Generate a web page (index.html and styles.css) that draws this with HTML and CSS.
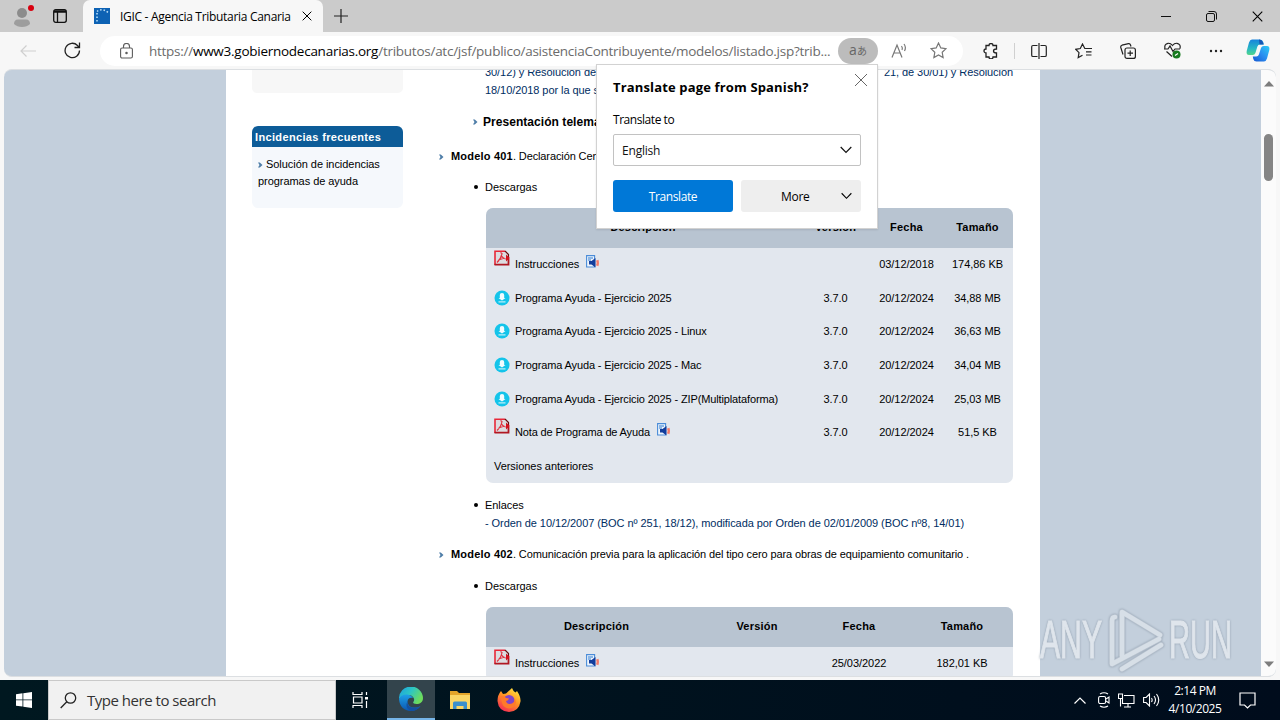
FILE: index.html
```html
<!DOCTYPE html>
<html lang="es">
<head>
    <meta charset="UTF-8">
    <title>IGIC - Agencia Tributaria Canaria</title>
    <link rel="stylesheet" href="styles.css">
</head>

<body>
<!-- shared icons -->
<svg class="defs" width="0" height="0">
    <symbol id="pdf" viewBox="0 0 16 16">
        <path d="M1 1h10l4 4v10H1z" fill="#dcdce0"/>
        <path d="M1 15V1.200h10" fill="none" stroke="#e82838" stroke-width="1.600"/>
        <path d="M.500 14.700h14V9" fill="none" stroke="#b01822" stroke-width="1.800"/>
        <path d="M11 1l3.500 3.500V7" fill="none" stroke="#611" stroke-width="1.200"/>
        <path d="M3 12.500Q7 9 8 3.500L6.500 2.500M7.500 6q2 3 5 3M4.500 10l6-2" fill="none" stroke="#e0323e" stroke-width="1.200"/>
        <path d="M12 4.500l4 3.500-4 3.500z" fill="#d3121e"/>
    </symbol>
    <symbol id="audio" viewBox="0 0 13 14">
        <path d="M.6.6h8v11.400h-8z" fill="#eef5fc" stroke="#4a8cd8" stroke-width="1.100"/>
        <path d="M2 3h5M2 5h3" stroke="#2a78d0"/>
        <path d="M3 6h2.500L9.500 3v9.500L5.500 9.500H3z" fill="#123d9c"/>
        <path d="M10.500 5.500q1.500 2.500 0 5M11.800 5q1 3 0 6" fill="none" stroke="#f47a68" stroke-width="1.300"/>
    </symbol>
    <symbol id="down" viewBox="0 0 16 16">
        <circle cx="8" cy="8" r="7.500" fill="#14c4ea"/>
        <path d="M5.800 5q0-2 2.200-2t2.200 2v3h1.300L8 10.500 4.500 8h1.300z" fill="#f2fcfe"/>
        <path d="M4.500 11.800h7" stroke="#b8eef8" stroke-width="1.200"/>
    </symbol>
    <symbol id="arrow" viewBox="0 0 5 6">
        <path d="M0 .500h1.800L4.500 3 1.800 5.500H0L1.500 3z" fill="#4f7ea8"/>
    </symbol>
    <symbol id="chevron" viewBox="0 0 12 8">
        <path d="M.7 1L6 6.500 11.300 1" fill="none" stroke="currentColor" stroke-width="1.200"/>
    </symbol>
    <symbol id="cross" viewBox="0 0 12 12">
        <path d="M.8.800l10.400 10.400M11.200.800L.8 11.200" fill="none" stroke="currentColor" stroke-width="1.200"/>
    </symbol>
</svg>

<div class="browser">
    <header class="tabbar">
        <div class="tabbar-left">
            <svg class="profile" width="22" height="24" viewBox="0 0 22 24">
                <circle cx="10" cy="9" r="5" fill="#8c8c8c"/>
                <path d="M2 20q0-4.500 4-4.500h8q4 0 4 4.500-3 3-8 3t-8-3z" fill="#9d9d9d"/>
                <circle cx="19" cy="4" r="3" fill="#d8000f"/>
            </svg>
            <svg class="workspaces" width="14" height="14" viewBox="0 0 14 14">
                <rect x=".7" y=".7" width="12.600" height="12.600" rx="2" fill="none" stroke="#111" stroke-width="1.300"/>
                <path d="M1 2.500h12" stroke="#111" stroke-width="2.500"/>
                <path d="M4.500 3v10" stroke="#111" stroke-width="1.300"/>
            </svg>
        </div>
        <div class="tab">
            <svg width="16" height="16" viewBox="0 0 16 16">
                <path d="M0 0h16v16H0z" fill="#0d62b4"/>
                <path d="M3 3.500q5-4 11 1" fill="none" stroke="#bfe0f8" stroke-width="1.500" stroke-dasharray="1.500 2"/>
                <path d="M3 5v9" stroke="#8fc3ec" stroke-width="2" stroke-dasharray="1.500 2"/>
            </svg>
            <span class="tab-title">IGIC - Agencia Tributaria Canaria</span>
            <svg class="tab-close" width="10" height="10"><use href="#cross"/></svg>
        </div>
        <svg class="new-tab" width="14" height="14" viewBox="0 0 14 14"><path d="M7 0v14M0 7h14" stroke="#222" stroke-width="1.200"/></svg>
        <div class="window-buttons">
            <svg width="10" height="10" viewBox="0 0 10 10"><path d="M0 5.500h10" stroke="#111"/></svg>
            <svg width="11" height="11" viewBox="0 0 11 11" fill="none" stroke="#111"><rect x=".5" y="2.500" width="8" height="8" rx="1.500"/><path d="M2.500.500H8q2.500 0 2.500 2.500v5.500"/></svg>
            <svg width="11" height="11"><use href="#cross"/></svg>
        </div>
    </header>

    <div class="toolbar">
        <svg class="back" width="16" height="12" viewBox="0 0 16 12" fill="none" stroke="#cfcfcf" stroke-width="1.200"><path d="M16 6H1M6.500.500L1 6l5.500 5.500"/></svg>
        <svg class="reload" width="17" height="17" viewBox="0 0 17 17" fill="none" stroke="#222" stroke-width="1.300"><path d="M15.500 8.500a7.200 7.200 0 1 1-2-5l1.500 1.700M15.500.500v5h-5"/></svg>
        <div class="address">
            <svg class="lock" width="13" height="16" viewBox="0 0 13 16" fill="none" stroke="#5c5c5c" stroke-width="1.100"><rect x=".6" y="5" width="11.800" height="10" rx="1.500"/><path d="M3.500 5V3.500a3 3 0 0 1 6 0V5"/><circle cx="6.500" cy="10" r=".7" fill="#5c5c5c"/></svg>
            <div class="url">https://<b>www3.gobiernodecanarias.org</b>/tributos/atc/jsf/publico/asistenciaContribuyente/modelos/listado.jsp?trib...</div>
            <span class="translate-pill">a<small>あ</small></span>
            <svg class="read" width="17" height="16" viewBox="0 0 17 16" fill="none" stroke="#777" stroke-width="1.200"><path d="M1 14.500L6 2l5 12.500M2.800 10h6.400M10.500 3q1.500 2 .5 4M13 1q2.500 3.500.5 7"/></svg>
            <svg class="star" width="17" height="17" viewBox="0 0 17 17" fill="none" stroke="#777" stroke-width="1.200"><path d="M8.500 1l2.300 4.900 5.200.7-3.800 3.700.9 5.300-4.600-2.600-4.600 2.600.9-5.300L1 6.600l5.200-.7z"/></svg>
        </div>
        <div class="tools">
            <svg width="16" height="16" viewBox="0 0 16 16" fill="none" stroke="#222" stroke-width="1.300"><path d="M3 2.500h3a2 2 0 0 1 4 0h3.500V6q-3 0-3 2t3 2v4H10a2 2 0 0 1-4 0H3v-4a2 2 0 0 1 0-4z"/></svg>
            <i class="divider"></i>
            <svg width="16" height="16" viewBox="0 0 16 16" fill="none" stroke="#222" stroke-width="1.200"><path d="M6.500 2.500H2q-1.300 0-1.300 1.300v8.400q0 1.300 1.300 1.300h4.500M9.500 2.500H14q1.300 0 1.300 1.300v8.400q0 1.300-1.300 1.300H9.500M8 0v16"/></svg>
            <svg width="17" height="16" viewBox="0 0 17 16" fill="none" stroke="#222" stroke-width="1.200"><path d="M11 5.500H9.800L7.500 1 5.300 5.500l-4.700.8 3.400 3.300-.8 5 4.300-2.300M11 5.500h6M11 8.800h5.500M11 12h5.500"/></svg>
            <svg width="16" height="16" viewBox="0 0 16 16" fill="none" stroke="#222" stroke-width="1.200"><rect x="5" y="5" width="10.400" height="10.400" rx="2"/><path d="M10.200 7.500v5.500M7.500 10.200H13M3 11.500L.8 4.500q-.4-1.800 1.200-2.300L8.500.700q1.500-.3 2 1.300l.5 1.500"/></svg>
            <svg width="17" height="17" viewBox="0 0 17 17" fill="none" stroke="#222" stroke-width="1.200"><path d="M1 6.500Q0 2 4 1.300 6.500 1 8.500 3.500 10.500 1 13 1.300 17 2 16 6.500M0 7h4l2-3 3 5.500L11 7h5M2.500 9.500L8 14.500"/><circle cx="12.500" cy="12.500" r="4" fill="#167a1e" stroke="none"/><path d="M11 13.500l3-2" stroke="#fff"/></svg>
            <svg width="14" height="4" viewBox="0 0 14 4" fill="#222"><circle cx="2" cy="2" r="1.200"/><circle cx="7" cy="2" r="1.200"/><circle cx="12" cy="2" r="1.200"/></svg>
            <svg class="copilot" width="24" height="23" viewBox="0 0 24 23">
                <defs>
                    <linearGradient id="cop1" x1="0" y1="0" x2="0" y2="1"><stop offset="0" stop-color="#1783dc"/><stop offset=".6" stop-color="#28b9c3"/><stop offset="1" stop-color="#53d58a"/></linearGradient>
                    <linearGradient id="cop2" x1="1" y1="0" x2="0" y2="1"><stop offset="0" stop-color="#2ccdf5"/><stop offset=".5" stop-color="#2a8df0"/><stop offset="1" stop-color="#1558d0"/></linearGradient>
                </defs>
                <path d="M6 .500h8q2.500 0 3.200 2.500l.8 2.500h-4q-2 0-2.600 2l-2 6.500q-.7 2-2.700 2H3q-3 0-2.300-4L3 3.500Q4 .500 6 .500z" fill="url(#cop1)"/>
                <path d="M18 22.500h-7.500q-2.500 0-3.200-2.500l-.5-2.500h3.500q2 0 2.600-2L15 9q.7-2 2.700-2H21q3 0 2.300 4L21 19.500q-1 3-3 3z" fill="url(#cop2)"/>
                <path d="M13 .500q3 0 3.700 2.500L17.500 5.500h-4z" fill="#1656b5"/>
            </svg>
        </div>
    </div>

    <div class="viewport">
        <main class="page">
            <aside class="sidebar">
                <div class="side-empty"></div>
                <section class="side-box">
                    <h2>Incidencias frecuentes</h2>
                    <p><svg width="5" height="6"><use href="#arrow"/></svg> Solución de incidencias programas de ayuda</p>
                </section>
            </aside>
            <div class="content">
                <p class="links links-top"><span>30/12) y Resolución de</span><span>21, de 30/01) y Resolución</span></p>
                <p class="links">18/10/2018 por la que s</p>
                <p class="telematic"><svg width="5" height="6"><use href="#arrow"/></svg><b>Presentación telemática</b></p>

                <p class="model"><svg width="5" height="6"><use href="#arrow"/></svg><b>Modelo 401</b>. Declaración Censal</p>
                <p class="item first-item">Descargas</p>
                <table class="files">
                    <thead>
                    <tr><th class="w-desc">Descripción</th><th class="w-ver">Versión</th><th class="w-date">Fecha</th><th class="w-size">Tamaño</th></tr>
                    </thead>
                    <tbody>
                    <tr><td><div class="file"><svg class="pdf" width="16" height="16"><use href="#pdf"/></svg><span>Instrucciones</span><svg class="audio" width="13" height="14"><use href="#audio"/></svg></div></td><td></td><td>03/12/2018</td><td>174,86 KB</td></tr>
                    <tr><td><div class="file program"><svg width="16" height="16"><use href="#down"/></svg><span>Programa Ayuda - Ejercicio 2025</span></div></td><td>3.7.0</td><td>20/12/2024</td><td>34,88 MB</td></tr>
                    <tr><td><div class="file program"><svg width="16" height="16"><use href="#down"/></svg><span>Programa Ayuda - Ejercicio 2025 - Linux</span></div></td><td>3.7.0</td><td>20/12/2024</td><td>36,63 MB</td></tr>
                    <tr><td><div class="file program"><svg width="16" height="16"><use href="#down"/></svg><span>Programa Ayuda - Ejercicio 2025 - Mac</span></div></td><td>3.7.0</td><td>20/12/2024</td><td>34,04 MB</td></tr>
                    <tr><td><div class="file program"><svg width="16" height="16"><use href="#down"/></svg><span>Programa Ayuda - Ejercicio 2025 - ZIP(Multiplataforma)</span></div></td><td>3.7.0</td><td>20/12/2024</td><td>25,03 MB</td></tr>
                    <tr><td><div class="file note"><svg class="pdf" width="16" height="16"><use href="#pdf"/></svg><span>Nota de Programa de Ayuda</span><svg class="audio" width="13" height="14"><use href="#audio"/></svg></div></td><td>3.7.0</td><td>20/12/2024</td><td>51,5 KB</td></tr>
                    <tr><td colspan="4">Versiones anteriores</td></tr>
                    </tbody>
                </table>
                <p class="item second-item">Enlaces</p>
                <p class="links orden">- Orden de 10/12/2007 (BOC nº 251, 18/12), modificada por Orden de 02/01/2009 (BOC nº8, 14/01)</p>

                <p class="model model-next"><svg width="5" height="6"><use href="#arrow"/></svg><b>Modelo 402</b>. Comunicación previa para la aplicación del tipo cero para obras de equipamiento comunitario .</p>
                <p class="item first-item">Descargas</p>
                <table class="files files-short">
                    <thead>
                    <tr><th class="w-desc">Descripción</th><th class="w-ver">Versión</th><th class="w-date">Fecha</th><th class="w-size">Tamaño</th></tr>
                    </thead>
                    <tbody>
                    <tr><td><div class="file"><svg class="pdf" width="16" height="16"><use href="#pdf"/></svg><span>Instrucciones</span><svg class="audio" width="13" height="14"><use href="#audio"/></svg></div></td><td></td><td>25/03/2022</td><td>182,01 KB</td></tr>
                    </tbody>
                </table>
            </div>
        </main>
        <div class="scrollbar">
            <svg width="10" height="6" viewBox="0 0 10 6"><path d="M5 0l5 5.500H0z" fill="#7d7d7d"/></svg>
            <div class="thumb"></div>
            <svg width="10" height="6" viewBox="0 0 10 6"><path d="M0 .500h10L5 6z" fill="#7d7d7d"/></svg>
        </div>
    </div>

    <div class="popup">
        <svg class="popup-close" width="14" height="14" viewBox="0 0 14 14"><path d="M1 1l12 12M13 1L1 13" stroke="currentColor"/></svg>
        <h3>Translate page from Spanish?</h3>
        <label>Translate to</label>
        <div class="select">English<svg width="12" height="8"><use href="#chevron"/></svg></div>
        <div class="popup-buttons">
            <button type="button" class="primary">Translate</button>
            <button type="button" class="more">More<svg width="11" height="8"><use href="#chevron"/></svg></button>
        </div>
    </div>

    <svg class="watermark" width="200" height="66" viewBox="0 0 200 66">
        <g font-family="Liberation Sans" font-size="53" fill="#e6ebf0" stroke="#e6ebf0" stroke-width="1.200">
            <text x="2" y="51" textLength="62" lengthAdjust="spacingAndGlyphs">ANY</text>
            <text x="131" y="51" textLength="63" lengthAdjust="spacingAndGlyphs">RUN</text>
        </g>
        <g fill="none" stroke-linecap="round" stroke-linejoin="round">
            <path d="M77 10q-3 0-3 4v43l47-25M84 49V5l38 23M84 62l39-24" stroke="#b4bfcb" stroke-width="6"/>
            <path d="M77 10q-3 0-3 4v43l47-25M84 49V5l38 23M84 62l39-24" stroke="#dde3ea" stroke-width="4.500"/>
        </g>
    </svg>
</div>

<footer class="taskbar">
    <div class="start"><svg width="16" height="16" viewBox="0 0 16 16" fill="#fff"><path d="M0 2.300l6.500-1v6.200H0zM7.300 1.200L16 0v7.500H7.300zM0 8.300h6.500v6.300L0 13.700zM7.300 8.300H16V16l-8.700-1.200z"/></svg></div>
    <div class="search">
        <svg width="17" height="17" viewBox="0 0 17 17" fill="none" stroke="#222" stroke-width="1.300"><circle cx="10.500" cy="6" r="5.200"/><path d="M6.800 9.700L.7 16"/></svg>
        Type here to search
    </div>
    <div class="task task-view"><svg width="17" height="16" viewBox="0 0 17 16" fill="none" stroke="#fff" stroke-width="1.200"><path d="M1 0v2.500h9V0M1 16v-2.500h9V16M1.500 5h8.500v6H1.500zM14.500 0v3M14.500 9v7"/><path d="M13 5h3v2.500h-3z" fill="#fff" stroke="none"/></svg></div>
    <div class="task edge">
        <svg width="24" height="24" viewBox="0 0 24 24">
            <defs>
                <linearGradient id="edge1" x1="0" y1="0" x2="1" y2=".5"><stop offset="0" stop-color="#1c9ee0"/><stop offset=".5" stop-color="#2cc5c5"/><stop offset="1" stop-color="#6ddc5c"/></linearGradient>
                <linearGradient id="edge2" x1="0" y1="0" x2="0" y2="1"><stop offset="0" stop-color="#1ea0e8"/><stop offset="1" stop-color="#0b56b0"/></linearGradient>
            </defs>
            <path d="M0 12A12 12 0 0 1 24 11c0 4-3 6-6.500 6-3 0-4-1-3-2.300 2-3-1-6.700-5-6.700Q3 8 0 12z" fill="url(#edge1)"/>
            <path d="M0 12Q2 7 8.500 7.500q4 .5 5.500 3.500-5-1-5.500 3.500Q9 21 16 20.500q3 0 5.500-1.500Q18 24 12 24 1 23.500 0 12z" fill="url(#edge2)"/>
            <path d="M8.500 14q-.5 7.500 8 7 3 0 5-2Q18 24 12 24q-7-3-3.500-10z" fill="#1450a0"/>
        </svg>
    </div>
    <div class="task">
        <svg width="22" height="19" viewBox="0 0 22 19">
            <path d="M1 0h7l2 2h11v5H1z" fill="#e4a52a"/>
            <path d="M1 4h20v14H1z" fill="#fbd665"/>
            <path d="M4 18v-6q0-1.500 1.500-1.500h11Q18 10.500 18 12v6h-3.500v-3h-7v3z" fill="#3b8fcc"/>
        </svg>
    </div>
    <div class="task">
        <svg width="24" height="24" viewBox="0 0 24 24">
            <defs>
                <linearGradient id="fox" x1=".8" y1="0" x2=".2" y2="1"><stop offset="0" stop-color="#ffe640"/><stop offset=".45" stop-color="#ff9423"/><stop offset="1" stop-color="#f52558"/></linearGradient>
            </defs>
            <path d="M4 3l2 3 3-.5L15 0q1 3 3.500 4.500L20 3q4 6 3.500 10.500Q22 23.500 12 24 1.500 23.500.5 13 .5 7 4 3z" fill="url(#fox)"/>
            <circle cx="12" cy="12.500" r="5.500" fill="#8045c8"/>
            <path d="M4 8q4 0 5 2l3 .5q-.5 2-3 2.500 1 4 6 2.500 3-1.500 2.500-5 3 4-.5 8-5 4-10 0Q4 15 4 8z" fill="#ff7a2a"/>
        </svg>
    </div>
    <div class="tray">
        <svg width="12" height="7" viewBox="0 0 12 7" fill="none" stroke="#fff" stroke-width="1.200"><path d="M.5 6.500L6 1l5.500 5.500"/></svg>
        <svg width="12" height="16" viewBox="0 0 12 16" fill="none" stroke="#fff" stroke-width="1.100"><rect x=".6" y="4.500" width="7" height="7" rx="1.500"/><path d="M8 7l3-2v6L8 9M2 2q4-2.500 8 0M2 14q4 2.500 8 0"/></svg>
        <svg width="17" height="15" viewBox="0 0 17 15" fill="none" stroke="#fff" stroke-width="1.100"><path d="M6 2.500h10v8H4.500V6M10 10.500v3.500M6 14h7M.5 1h4v4.500h-4zM2.500 5.500v8"/></svg>
        <svg width="17" height="14" viewBox="0 0 17 14" fill="none" stroke="#fff" stroke-width="1.100"><path d="M.6 4.500h2.500L6.500 1v12L3.100 9.500H.6zM8.500 5q1.300 2 0 4M11 3q3 4 0 8M13.500 1q4.500 6 0 12"/></svg>
        <div class="clock"><span>2:14 PM</span><span class="date">4/10/2025</span></div>
        <svg class="notes" width="17" height="17" viewBox="0 0 17 17" fill="none" stroke="#fff" stroke-width="1.200"><path d="M1 1h15v12h-4.500L8.500 16 5.500 13H1z"/></svg>
    </div>
</footer>
</body>
</html>
```

FILE: styles.css
```css
* {
    box-sizing: border-box;
}
body {
    margin: 0;
    width: 1280px;
    height: 720px;
    overflow: hidden;
    background: #f7f7f7;
    font-family: "Open Sans", "Noto Sans", sans-serif;
    color: #000;
}
svg {
    flex: none;
    display: block;
}
.defs {
    position: absolute;
}
p, h2, h3 {
    margin: 0;
}
.browser {
    position: relative;
    height: 680px;
}

/* tabs */
.tabbar {
    display: flex;
    height: 32px;
    background: #cbcbcb;
}
.tabbar-left {
    display: flex;
    width: 83px;
    padding: 4px 0 0 12px;
}
.workspaces {
    margin: 5px 0 0 19px;
}
.tab {
    display: flex;
    align-items: center;
    width: 240px;
    padding: 0 11px;
    background: #f7f7f7;
    border-radius: 7px 7px 0 0;
}
.tab-title {
    flex: 1;
    padding-left: 10px;
    font-size: 12px;
    letter-spacing: -0.3px;
    white-space: nowrap;
}
.new-tab {
    margin: 9px 0 0 11px;
}
.window-buttons {
    display: flex;
    align-items: center;
    gap: 35px;
    margin-left: auto;
    padding-right: 17px;
}

/* address bar */
.toolbar {
    display: flex;
    align-items: center;
    height: 37px;
}
.back {
    margin-left: 20px;
}
.reload {
    margin-left: 28px;
}
.address {
    display: flex;
    align-items: center;
    width: 863px;
    height: 30px;
    margin-left: 19px;
    padding-left: 20px;
    background: #fff;
    border-radius: 15px;
}
.url {
    width: 688px;
    margin-left: 16px;
    color: #6b6b6b;
    font-size: 13.5px;
    letter-spacing: -0.26px;
    white-space: nowrap;
}
.url b {
    color: #000;
    font-weight: normal;
}
.translate-pill {
    width: 40px;
    height: 26px;
    margin-left: 1px;
    border-radius: 13px;
    background: #bcbcbc;
    color: #666;
    font-size: 14px;
    line-height: 23px;
    text-align: center;
}
.translate-pill small {
    font-family: "Noto Sans CJK JP", sans-serif;
    font-size: 10px;
}
.read {
    margin-left: 13px;
}
.star {
    margin-left: 22px;
}
.tools {
    display: flex;
    align-items: center;
    margin-left: 20px;
}
.tools svg {
    margin-right: 28px;
}
.tools svg:first-child {
    margin-right: 15px;
}
.tools .divider {
    width: 1px;
    height: 16px;
    margin-right: 16px;
    background: #d0d0d0;
}
.tools .copilot {
    margin: 0 0 0 -5px;
}

/* web page */
.viewport {
    display: flex;
    justify-content: space-between;
    height: 608px;
    margin: 0 4px;
    padding-left: 222px;
    border: solid #dcdfe2;
    border-width: 1px 0;
    border-radius: 8px;
    background: #c3cfdc;
    overflow: hidden;
}
.page {
    display: flex;
    width: 814px;
    padding-left: 26px;
    background: #fff;
    font-family: "Liberation Sans", Arial, sans-serif;
    font-size: 11px;
    line-height: 18px;
    letter-spacing: -0.05px;
}
.sidebar {
    width: 151px;
}
.side-empty {
    height: 23px;
    border-radius: 0 0 5px 5px;
    background: #f7f7f7;
}
.side-box {
    height: 82px;
    margin-top: 33px;
    border-radius: 6px;
    background: #f5f8fc;
    overflow: hidden;
}
.side-box h2 {
    height: 21px;
    padding-left: 3px;
    background: #0d5c98;
    color: #fff;
    font-size: 11px;
    line-height: 22px;
    letter-spacing: 0.35px;
}
.side-box p {
    padding: 9px 6px;
    line-height: 17px;
}
.side-box p svg {
    display: inline-block;
}
.content {
    width: 611px;
    flex: none;
    padding-left: 36px;
    white-space: nowrap;
}
.links {
    padding-left: 46px;
    color: #002d62;
    letter-spacing: -0.07px;
}
.links-top {
    display: flex;
    justify-content: space-between;
    margin-top: -7px;
    padding-right: 1px;
}
.telematic {
    display: flex;
    align-items: center;
    gap: 5px;
    margin-top: 14px;
    padding-left: 34px;
    font-size: 12px;
    letter-spacing: 0.05px;
}
.model {
    display: flex;
    align-items: center;
    margin-top: 16px;
    letter-spacing: -0.11px;
    white-space: pre;
}
.model svg {
    margin: 1px 7px 0 0;
}
.model b {
    letter-spacing: 0.2px;
}
.item {
    display: flex;
    align-items: center;
    padding-left: 35px;
}
.item::before {
    content: "";
    width: 4px;
    height: 4px;
    margin-right: 7px;
    border-radius: 2px;
    background: #000;
}
.first-item {
    margin: 13px 0 12px;
}
.second-item {
    margin-top: 13px;
}
.model-next {
    margin-top: 13px;
}
.model-next + .first-item {
    margin-top: 14px;
}
.files {
    width: 527px;
    margin-left: 47px;
    border-collapse: separate;
    border-spacing: 0;
    table-layout: fixed;
    border-radius: 7px;
    background: #e2e7ee;
    overflow: hidden;
    text-align: center;
}
.files th {
    height: 40px;
    padding: 0 0 2px;
    background: #b8c4d1;
    letter-spacing: 0.2px;
}
.files td {
    height: 33.6px;
    padding: 0 0 1px;
}
.files td:first-child {
    padding-left: 8px;
    text-align: left;
}
.w-desc {
    width: 314px;
}
.w-ver {
    width: 71px;
}
.w-date {
    width: 71px;
}
.files-short .w-desc {
    width: 221px;
}
.files-short .w-ver {
    width: 100px;
}
.files-short .w-date {
    width: 104px;
}
.file {
    display: flex;
    align-items: center;
}
.file span {
    margin-left: 5px;
}
.file .pdf {
    margin-top: -12px;
}
.file .audio {
    margin: -4px 0 0 7px;
}
.program {
    letter-spacing: -0.13px;
}
.note {
    letter-spacing: -0.15px;
}

/* scrollbar */
.scrollbar {
    display: flex;
    flex-direction: column;
    align-items: center;
    width: 15px;
    padding: 11px 0 9px;
    background: #fbfbfb;
}
.thumb {
    width: 9px;
    height: 47px;
    margin: 47px 0 auto;
    border-radius: 5px;
    background: #858585;
}

/* translate bubble, lies over the page */
.popup {
    position: absolute;
    left: 596px;
    top: 64px;
    width: 282px;
    height: 165px;
    padding: 13px 16px;
    border: 1px solid #d2d2d2;
    background: #fff;
    font-size: 12px;
    box-shadow: 0 1px 2px rgba(0, 0, 0, 0.1);
}
.popup-close {
    position: absolute;
    right: 9px;
    top: 8px;
    color: #666;
}
.popup h3 {
    font-size: 13px;
    line-height: 18px;
    letter-spacing: 0.15px;
}
.popup label {
    display: block;
    margin-top: 15px;
    line-height: 18px;
    letter-spacing: -0.45px;
}
.select {
    display: flex;
    align-items: center;
    justify-content: space-between;
    height: 32px;
    margin-top: 5px;
    padding: 0 8px;
    border: 1px solid #c2c2c2;
    border-radius: 2px;
    color: #111;
    letter-spacing: -0.2px;
}
.popup-buttons {
    display: flex;
    gap: 8px;
    margin-top: 14px;
}
.popup-buttons button {
    width: 120px;
    height: 32px;
    padding: 0;
    border: none;
    border-radius: 3px;
    font-family: inherit;
    font-size: 12px;
    letter-spacing: -0.4px;
}
.popup-buttons .primary {
    background: #0078d7;
    color: #fff;
}
.popup-buttons .more {
    display: flex;
    align-items: center;
    justify-content: space-between;
    padding: 0 9px 0 40px;
    background: #eee;
    letter-spacing: -0.3px;
}

.watermark {
    position: absolute;
    left: 1038px;
    top: 607px;
    opacity: 0.8;
    filter: drop-shadow(0 0 1px #8794a4);
}

/* windows taskbar */
.taskbar {
    display: flex;
    align-items: center;
    height: 40px;
    background: linear-gradient(90deg, #001820, #000c1c);
    color: #fff;
}
.start {
    width: 48px;
    padding-left: 16px;
}
.search {
    display: flex;
    align-items: center;
    gap: 10px;
    width: 288px;
    height: 40px;
    padding-left: 11px;
    border: 1px solid #c9c9c9;
    background: #f1f1f1;
    color: #333;
    font-size: 15px;
    letter-spacing: -0.48px;
}
.task {
    display: flex;
    align-items: center;
    justify-content: center;
    width: 49px;
    height: 40px;
}
.task-view {
    width: 51px;
    padding-right: 3px;
}
.edge {
    width: 48px;
    border-bottom: 2px solid #76b5e8;
    background: #33444c;
}
.tray {
    display: flex;
    align-items: center;
    gap: 8px;
    margin-left: auto;
    padding-right: 24px;
}
.tray svg:nth-child(2) {
    margin-left: 4px;
}
.clock {
    display: flex;
    flex-direction: column;
    align-items: center;
    width: 54px;
    font-size: 12px;
    line-height: 18px;
    letter-spacing: -0.45px;
    white-space: nowrap;
}
.tray .notes {
    margin-left: 9px;
}
```
